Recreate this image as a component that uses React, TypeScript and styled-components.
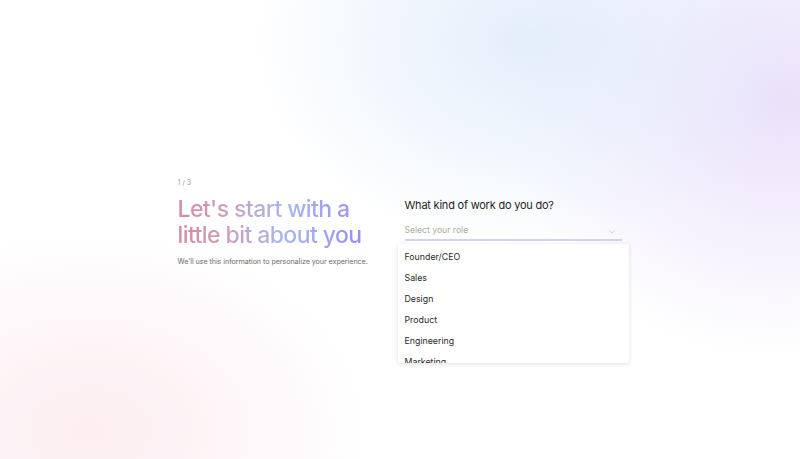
import React from "react";
import styled, { createGlobalStyle } from "styled-components";

const Global = createGlobalStyle`
  html, body { margin: 0; padding: 0; }
  body { font-family: Inter, "Noto Sans", sans-serif; -webkit-font-smoothing: antialiased; }
  * { box-sizing: border-box; }
`;

const Page = styled.div`
  width: 100%;
  height: 459px;
  overflow: hidden;
  display: flex;
  justify-content: center;
  align-items: flex-start;
  padding-top: 178px;
  background:
    radial-gradient(ellipse 280px 210px at 530px 40px, rgba(226, 237, 251, 0.95), rgba(226, 237, 251, 0) 100%),
    radial-gradient(ellipse 280px 260px at 780px 100px, rgba(233, 223, 250, 0.95), rgba(233, 223, 250, 0) 100%),
    radial-gradient(ellipse 280px 200px at 90px 430px, rgba(252, 236, 240, 0.95), rgba(252, 236, 240, 0) 100%),
    #ffffff;
`;

const Row = styled.div`
  display: flex;
  align-items: flex-start;
  margin-left: 6px;
`;

const Intro = styled.div`
  width: 220px;
  display: flex;
  flex-direction: column;
  align-items: flex-start;
`;

const Step = styled.div`
  font-size: 7px;
  line-height: 10px;
  color: #9a9a9a;
`;

const Heading = styled.h1`
  margin: 8px 0 0;
  font-size: 23px;
  line-height: 26px;
  font-weight: 500;
  letter-spacing: -0.025em;
  background: linear-gradient(90deg, #d68aa5 0%, #cc9fbe 28%, #a9b6ee 58%, #9b8ef0 100%);
  -webkit-background-clip: text;
  background-clip: text;
  color: transparent;
`;

const Sub = styled.p`
  margin: 9px 0 0;
  font-size: 7.2px;
  line-height: 10px;
  color: #6b6b6b;
  letter-spacing: -0.01em;
`;

const Form = styled.div`
  width: 231px;
  padding-top: 20px;
`;

const Question = styled.div`
  padding-left: 7px;
  font-size: 11px;
  line-height: 15px;
  color: #1f1f1f;
  letter-spacing: -0.02em;
`;

const Select = styled.div`
  margin: 11px 7px 0;
  display: flex;
  align-items: center;
  justify-content: space-between;
  padding-bottom: 3px;
  border-bottom: 2px solid #d2d2f3;
`;

const Placeholder = styled.span`
  font-size: 8.6px;
  line-height: 12px;
  color: #a9a9a9;
`;

const Chevron = styled.svg`
  width: 8px;
  height: 8px;
  margin-right: 6px;
  margin-top: 3px;
`;

const Menu = styled.div`
  margin-top: 3px;
  height: 119px;
  overflow: hidden;
  background: #ffffff;
  border-radius: 2px;
  box-shadow: 0 1px 4px rgba(0, 0, 0, 0.13);
  padding-top: 2px;
`;

const Item = styled.div`
  height: 21px;
  line-height: 21px;
  padding-left: 7px;
  font-size: 8.8px;
  color: #2a2a2a;
`;

const roles = ["Founder/CEO", "Sales", "Design", "Product", "Engineering", "Marketing"];

export default function App() {
  return (
    <>
      <Global />
      <Page>
        <Row>
          <Intro>
            <Step>1 / 3</Step>
            <Heading>
              Let's start with a
              <br />
              little bit about you
            </Heading>
            <Sub>We'll use this information to personalize your experience.</Sub>
          </Intro>
          <Form>
            <Question>What kind of work do you do?</Question>
            <Select>
              <Placeholder>Select your role</Placeholder>
              <Chevron viewBox="0 0 10 10" fill="none">
                <path d="M2 3.5 L5 6.5 L8 3.5" stroke="#c4c4c4" strokeWidth="1" strokeLinecap="round" strokeLinejoin="round" />
              </Chevron>
            </Select>
            <Menu>
              {roles.map((r) => (
                <Item key={r}>{r}</Item>
              ))}
            </Menu>
          </Form>
        </Row>
      </Page>
    </>
  );
}
